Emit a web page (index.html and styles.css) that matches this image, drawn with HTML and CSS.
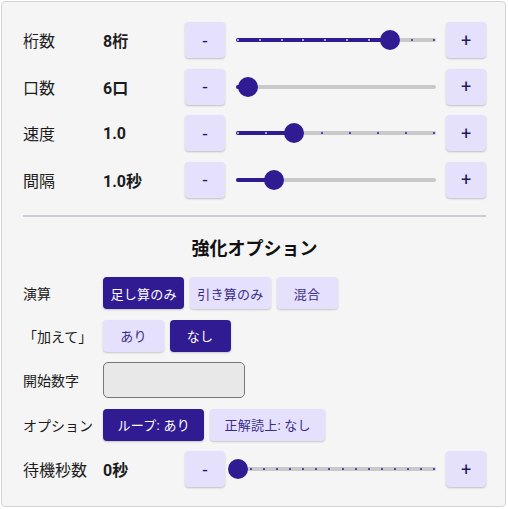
FILE: index.html
```html
<!DOCTYPE html>
<html lang="ja">
<head>
  <meta charset="UTF-8" />
  <title>フラッシュ暗算 - 設定</title>
  <meta name="viewport" content="width=device-width, initial-scale=1.0" />
  <link rel="stylesheet" href="styles.css">
</head>
<body>

  <div class="panel">
    <div class="controls" id="controls"></div>

    <div class="divider"></div>

    <h2 class="title">強化オプション</h2>

    <div class="options">
      <div class="opt-row">
        <div class="opt-label">演算</div>
        <div class="chips">
          <button class="chip active">足し算のみ</button>
          <button class="chip">引き算のみ</button>
          <button class="chip">混合</button>
        </div>
      </div>

      <div class="opt-row">
        <div class="opt-label">「加えて」</div>
        <div class="chips">
          <button class="chip">あり</button>
          <button class="chip active">なし</button>
        </div>
      </div>

      <div class="opt-row">
        <div class="opt-label">開始数字</div>
        <input type="text" class="start-input" />
      </div>

      <div class="opt-row">
        <div class="opt-label">オプション</div>
        <div class="chips">
          <button class="chip wide active">ループ: あり</button>
          <button class="chip wide">正解読上: なし</button>
        </div>
      </div>

      <div id="waitRow"></div>
    </div>
  </div>

  <script>
    const sliders = [
      { label: "桁数", unit: "桁", min: 1, max: 10, step: 1, value: 8, marks: true },
      { label: "口数", unit: "口", min: 1, max: 100, step: 1, value: 6, marks: false },
      { label: "速度", unit: "", min: 0.6, max: 2.0, step: 0.2, value: 1.0, marks: true, fixed: 1 },
      { label: "間隔", unit: "秒", min: 0.1, max: 5.0, step: 0.1, value: 1.0, marks: false, fixed: 1 }
    ];
    const waitSlider = { label: "待機秒数", unit: "秒", min: 0, max: 15, step: 1, value: 0, marks: true };

    function pos(f) {
      return `calc(2px + ${f.toFixed(4)} * (100% - 4px))`;
    }

    function buildRow(s) {
      const f = (s.value - s.min) / (s.max - s.min);
      const text = (s.fixed ? s.value.toFixed(s.fixed) : s.value) + s.unit;

      let marks = "";
      if (s.marks) {
        const count = Math.round((s.max - s.min) / s.step);
        for (let i = 0; i <= count; i++) {
          const mf = i / count;
          marks += `<span class="mark${mf <= f ? " on" : ""}" style="left:${pos(mf)};"></span>`;
        }
      }

      const row = document.createElement("div");
      row.className = "row";
      row.innerHTML = `
        <div class="label">${s.label}</div>
        <div class="value">${text}</div>
        <button class="step-btn">-</button>
        <div class="slider">
          <div class="track">
            <span class="fill" style="width:${pos(f)};"></span>
            ${marks}
          </div>
          <span class="thumb" style="left:${pos(f)};"></span>
        </div>
        <button class="step-btn">+</button>
      `;
      return row;
    }

    const controls = document.getElementById("controls");
    sliders.forEach(s => controls.appendChild(buildRow(s)));
    document.getElementById("waitRow").replaceWith(buildRow(waitSlider));
  </script>
</body>
</html>
```

FILE: styles.css
```css
body {
  margin: 0;
  font-family: Roboto, "Noto Sans CJK JP", sans-serif;
  background: #fff;
  color: #1c1c1c;
}

.panel {
  box-sizing: border-box;
  width: 505px;
  height: 506px;
  margin: 1px 0 0 1px;
  padding: 20px 19px 0 21px;
  background: #f5f5f5;
  border: 1px solid #d4d4d4;
  border-radius: 4px;
}

.controls,
.options {
  display: flex;
  flex-direction: column;
  gap: 10.5px;
}

.row {
  display: flex;
  align-items: center;
  height: 36px;
}

.label {
  width: 80px;
  font-size: 16px;
}

.value {
  width: 82px;
  font-size: 16px;
  font-weight: bold;
}

.step-btn {
  width: 40px;
  height: 36px;
  padding: 0;
  border: none;
  border-radius: 4px;
  background: #e5e0fc;
  color: #1f1a5c;
  font-family: Roboto, sans-serif;
  font-size: 18px;
  box-shadow: 0 1px 2px rgba(0,0,0,0.22);
  cursor: pointer;
}

.slider {
  flex: 1;
  position: relative;
  height: 20px;
  margin: 0 10px 0 11px;
}

.track {
  position: absolute;
  left: 0;
  right: 0;
  top: 8px;
  height: 4px;
  border-radius: 2px;
  background: #c9c9c9;
}

.fill {
  position: absolute;
  left: 0;
  top: 0;
  height: 100%;
  border-radius: 2px;
  background: #311b92;
}

.mark {
  position: absolute;
  top: 1px;
  width: 2px;
  height: 2px;
  margin-left: -1px;
  border-radius: 50%;
  background: #311b92;
}

.mark.on {
  background: #d9d2f7;
}

.thumb {
  position: absolute;
  top: 50%;
  width: 20px;
  height: 20px;
  margin: -10px 0 0 -10px;
  border-radius: 50%;
  background: #311b92;
}

.divider {
  height: 2px;
  margin-top: 17.5px;
  background: #cdcad6;
}

.title {
  margin: 20px 0 16px;
  font-size: 18px;
  line-height: 24px;
  font-weight: bold;
  text-align: center;
  color: #111;
}

.opt-row {
  display: flex;
  align-items: center;
  min-height: 32px;
}

.opt-label {
  width: 80px;
  font-size: 14px;
}

.chips {
  display: flex;
  gap: 5.5px;
}

.chip {
  min-width: 61px;
  height: 32px;
  padding: 0 7.5px;
  border: none;
  border-radius: 4px;
  background: #e5e0fc;
  color: #3a2d8a;
  font-family: Roboto, "Noto Sans CJK JP", sans-serif;
  font-size: 13px;
  letter-spacing: 0.02em;
  box-shadow: 0 1px 2px rgba(0,0,0,0.2);
  cursor: pointer;
}

.chip.wide {
  padding: 0 14.5px;
}

.chip.active {
  background: #311b92;
  color: #fff;
}

.start-input {
  box-sizing: border-box;
  width: 142px;
  height: 36px;
  margin: 0;
  border: 1px solid #777;
  border-radius: 5px;
  background: #e8e8e8;
}
```
